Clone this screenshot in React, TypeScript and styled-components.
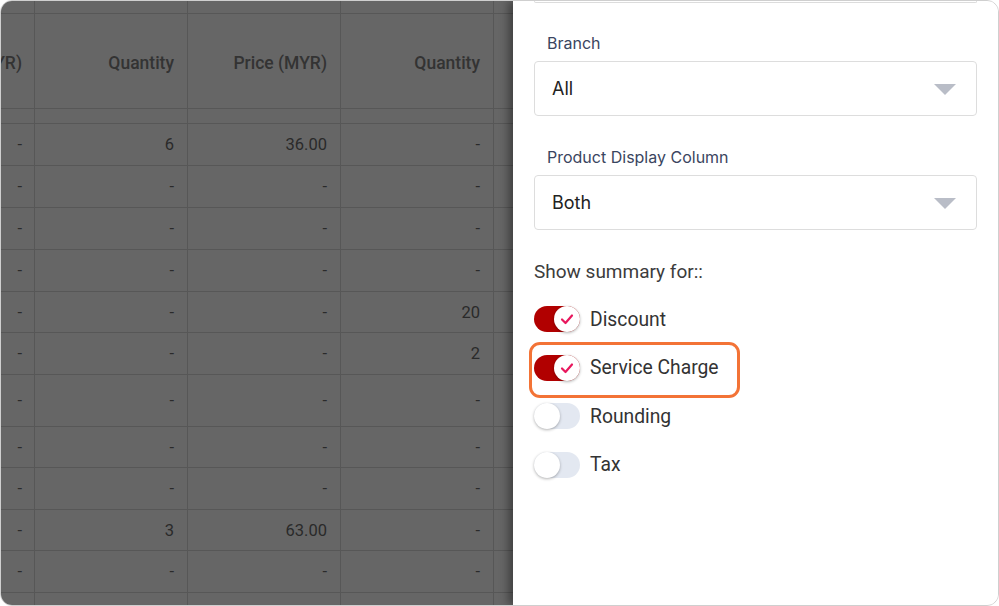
import React from "react";
import styled, { createGlobalStyle } from "styled-components";

const Global = createGlobalStyle`
  html, body { margin: 0; padding: 0; background: #ffffff; }
  * { box-sizing: border-box; }
`;

const Frame = styled.div`
  width: 999px;
  height: 606px;
  border: 1px solid #cfcfcf;
  border-radius: 12px;
  overflow: hidden;
  display: flex;
  background: #ffffff;
`;

const TableArea = styled.div`
  width: 512px;
  flex: none;
  background: #666666;
  overflow: hidden;
  font-family: Roboto, "Liberation Sans", sans-serif;
  color: #2a2a2a;
`;

const Row = styled.div<{ $h: number }>`
  display: grid;
  grid-template-columns: 34px 153px 153px 153px 1fr;
  height: ${(p) => p.$h}px;
  border-bottom: 1px solid #575757;
`;

const Cell = styled.div<{ $head?: boolean }>`
  border-right: 1px solid #575757;
  display: flex;
  align-items: center;
  justify-content: flex-end;
  padding-right: 13px;
  padding-top: ${(p) => (p.$head ? "4px" : "0")};
  font-size: ${(p) => (p.$head ? "17.5px" : "16.5px")};
  font-weight: ${(p) => (p.$head ? 500 : 400)};
  color: ${(p) => (p.$head ? "#333333" : "#2a2a2a")};
  white-space: nowrap;
  overflow: hidden;
  &:first-child { padding-right: 12px; }
  &:last-child { border-right: none; }
`;

const Drawer = styled.div`
  flex: 1;
  background: #ffffff;
  box-shadow: -5px 0 8px rgba(0, 0, 0, 0.35);
  padding: 0 21px 0 21px;
  display: flex;
  flex-direction: column;
  position: relative;
`;

const CutField = styled.div`
  height: 2px;
  border: 1px solid #dcdcdc;
  border-top: none;
  border-radius: 0 0 4px 4px;
`;

const Field = styled.div<{ $gap: number }>`
  display: flex;
  flex-direction: column;
  margin-top: ${(p) => p.$gap}px;
`;

const Label = styled.div`
  font-family: Inter, "Liberation Sans", sans-serif;
  font-size: 16px;
  line-height: 20px;
  color: #3a4560;
  padding-left: 13px;
  margin-bottom: 8px;
`;

const Select = styled.div`
  height: 55px;
  border: 1px solid #dddddd;
  border-radius: 4px;
  display: flex;
  align-items: center;
  justify-content: space-between;
  padding: 0 20px 0 17px;
  font-family: Inter, "Liberation Sans", sans-serif;
  font-size: 18px;
  color: #222222;
`;

const Caret = styled.span`
  width: 0;
  height: 0;
  border-left: 11px solid transparent;
  border-right: 11px solid transparent;
  border-top: 11px solid #b9bdc7;
  margin-top: 2px;
`;

const SummaryTitle = styled.div`
  margin-top: 31px;
  font-family: Roboto, "Liberation Sans", sans-serif;
  font-size: 19px;
  line-height: 22px;
  color: #3c3c3c;
`;

const ToggleList = styled.div`
  display: flex;
  flex-direction: column;
  gap: 22.5px;
  margin-top: 23px;
`;

const ToggleRow = styled.div<{ $highlight?: boolean }>`
  position: relative;
  display: flex;
  align-items: center;
  gap: 10px;
  height: 26px;
  font-family: Roboto, "Liberation Sans", sans-serif;
  font-size: 19.3px;
  color: #333333;
  ${(p) =>
    p.$highlight &&
    `
    &::after {
      content: "";
      position: absolute;
      left: -5px;
      top: -13px;
      width: 205px;
      height: 50px;
      border: 3px solid #f37336;
      border-radius: 11px;
    }
  `}
`;

const Track = styled.div<{ $on: boolean }>`
  position: relative;
  width: 46px;
  height: 26px;
  border-radius: 13px;
  background: ${(p) => (p.$on ? "#b10000" : "#e3e8f1")};
  flex: none;
`;

const Knob = styled.div<{ $on: boolean }>`
  position: absolute;
  top: 0;
  left: ${(p) => (p.$on ? "20px" : "0")};
  width: 26px;
  height: 26px;
  border-radius: 50%;
  background: #ffffff;
  box-shadow: 0 1px 3px rgba(0, 0, 0, 0.3);
  display: flex;
  align-items: center;
  justify-content: center;
`;

const Toggle = ({ on, label, highlight }: { on: boolean; label: string; highlight?: boolean }) => (
  <ToggleRow $highlight={highlight}>
    <Track $on={on}>
      <Knob $on={on}>
        {on && (
          <svg width="16" height="16" viewBox="0 0 16 16">
            <path d="M3 8.5 L6.5 12 L13 4.5" fill="none" stroke="#e8175d" strokeWidth="2.2" strokeLinecap="round" strokeLinejoin="round" />
          </svg>
        )}
      </Knob>
    </Track>
    <span>{label}</span>
  </ToggleRow>
);

type R = { h: number; c: string[]; head?: boolean };

const rows: R[] = [
  { h: 13, c: ["", "", "", "", ""] },
  { h: 95, c: ["YR)", "Quantity", "Price (MYR)", "Quantity", ""], head: true },
  { h: 15, c: ["", "", "", "", ""] },
  { h: 42, c: ["-", "6", "36.00", "-", ""] },
  { h: 42, c: ["-", "-", "-", "-", ""] },
  { h: 42, c: ["-", "-", "-", "-", ""] },
  { h: 42, c: ["-", "-", "-", "-", ""] },
  { h: 41, c: ["-", "-", "-", "20", ""] },
  { h: 42, c: ["-", "-", "-", "2", ""] },
  { h: 52, c: ["-", "-", "-", "-", ""] },
  { h: 41, c: ["-", "-", "-", "-", ""] },
  { h: 42, c: ["-", "-", "-", "-", ""] },
  { h: 41, c: ["-", "3", "63.00", "-", ""] },
  { h: 42, c: ["-", "-", "-", "-", ""] },
  { h: 42, c: ["", "", "", "", ""] },
];

export default function App() {
  return (
    <>
      <Global />
      <Frame>
        <TableArea>
          {rows.map((r, i) => (
            <Row key={i} $h={r.h}>
              {r.c.map((t, j) => (
                <Cell key={j} $head={r.head}>
                  {t}
                </Cell>
              ))}
            </Row>
          ))}
        </TableArea>
        <Drawer>
          <CutField />
          <Field $gap={30}>
            <Label>Branch</Label>
            <Select>
              <span>All</span>
              <Caret />
            </Select>
          </Field>
          <Field $gap={31}>
            <Label>Product Display Column</Label>
            <Select>
              <span>Both</span>
              <Caret />
            </Select>
          </Field>
          <SummaryTitle>Show summary for::</SummaryTitle>
          <ToggleList>
            <Toggle on label="Discount" />
            <Toggle on label="Service Charge" highlight />
            <Toggle on={false} label="Rounding" />
            <Toggle on={false} label="Tax" />
          </ToggleList>
        </Drawer>
      </Frame>
    </>
  );
}
